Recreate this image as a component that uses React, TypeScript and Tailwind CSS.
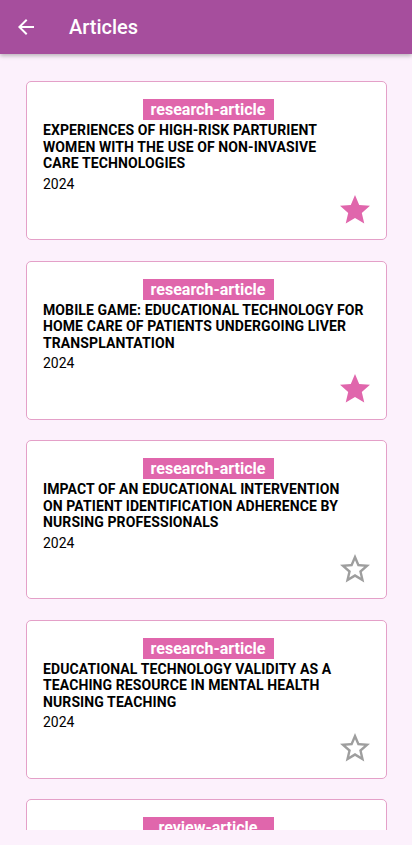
import React from "react";

type Article = {
  kind: string;
  title: string;
  year: string;
  fav: boolean;
};

// títulos com quebras iguais às do app
const articles: Article[] = [
  {
    kind: "research-article",
    title: "EXPERIENCES OF HIGH-RISK PARTURIENT\nWOMEN WITH THE USE OF NON-INVASIVE\nCARE TECHNOLOGIES",
    year: "2024",
    fav: true,
  },
  {
    kind: "research-article",
    title: "MOBILE GAME: EDUCATIONAL TECHNOLOGY FOR\nHOME CARE OF PATIENTS UNDERGOING LIVER\nTRANSPLANTATION",
    year: "2024",
    fav: true,
  },
  {
    kind: "research-article",
    title: "IMPACT OF AN EDUCATIONAL INTERVENTION\nON PATIENT IDENTIFICATION ADHERENCE BY\nNURSING PROFESSIONALS",
    year: "2024",
    fav: false,
  },
  {
    kind: "research-article",
    title: "EDUCATIONAL TECHNOLOGY VALIDITY AS A\nTEACHING RESOURCE IN MENTAL HEALTH\nNURSING TEACHING",
    year: "2024",
    fav: false,
  },
  {
    kind: "review-article",
    title: "NURSING CARE TECHNOLOGIES: AN INTEGRATIVE REVIEW",
    year: "2024",
    fav: false,
  },
];

function Star({ filled }: { filled: boolean }) {
  return (
    <svg width="36" height="36" viewBox="0 0 24 24" className={filled ? "fill-[#e066ac]" : "fill-[#9e9e9e]"}>
      {filled ? (
        <path d="M12 17.27L18.18 21l-1.64-7.03L22 9.24l-7.19-.61L12 2 9.19 8.63 2 9.24l5.46 4.73L5.82 21z" />
      ) : (
        <path d="M22 9.24l-7.19-.62L12 2 9.19 8.63 2 9.24l5.46 4.73L5.82 21 12 17.27 18.18 21l-1.63-7.03L22 9.24zM12 15.4l-3.76 2.27 1-4.28-3.32-2.88 4.38-.38L12 6.1l1.71 4.04 4.38.38-3.32 2.88 1 4.28L12 15.4z" />
      )}
    </svg>
  );
}

function Card({ a }: { a: Article }) {
  return (
    <div className="shrink-0 h-[159px] bg-white border border-[#e4a0c8] rounded-[5px] flex flex-col pt-[17px] pl-4 pr-[13px]">
      <div className="self-center w-[131px] h-[21px] bg-[#e066ac] text-white text-[16px] font-bold leading-[21px] text-center">
        {a.kind}
      </div>
      <div className="mt-[2px] text-[14px] font-bold leading-[16.5px] tracking-[0.1px] text-black whitespace-pre-line">
        {a.title}
      </div>
      <div className="mt-[2px] text-[14px] leading-[20px] text-black">{a.year}</div>
      <div className="-mt-[2px] self-end">
        <Star filled={a.fav} />
      </div>
    </div>
  );
}

export default function App() {
  return (
    <div className="w-[412px] h-[845px] bg-[#fcf1fc] flex flex-col overflow-hidden" style={{ fontFamily: "Roboto, 'Noto Sans', sans-serif" }}>
      <header className="relative z-10 h-[54px] shrink-0 bg-[#a64e9d] flex items-center shadow-[0_2px_4px_rgba(0,0,0,0.25)]">
        <svg width="24" height="24" viewBox="0 0 24 24" className="ml-[14px] fill-white">
          <path d="M20 11H7.83l5.59-5.59L12 4l-8 8 8 8 1.41-1.41L7.83 13H20v-2z" />
        </svg>
        <h1 className="ml-[31px] text-white text-[20px] font-medium">Articles</h1>
      </header>
      <main className="h-[776px] overflow-hidden flex flex-col gap-[20.5px] pl-[26px] pr-[25px] pt-[27px]">
        {articles.map((a, i) => (
          <Card key={i} a={a} />
        ))}
      </main>
    </div>
  );
}
